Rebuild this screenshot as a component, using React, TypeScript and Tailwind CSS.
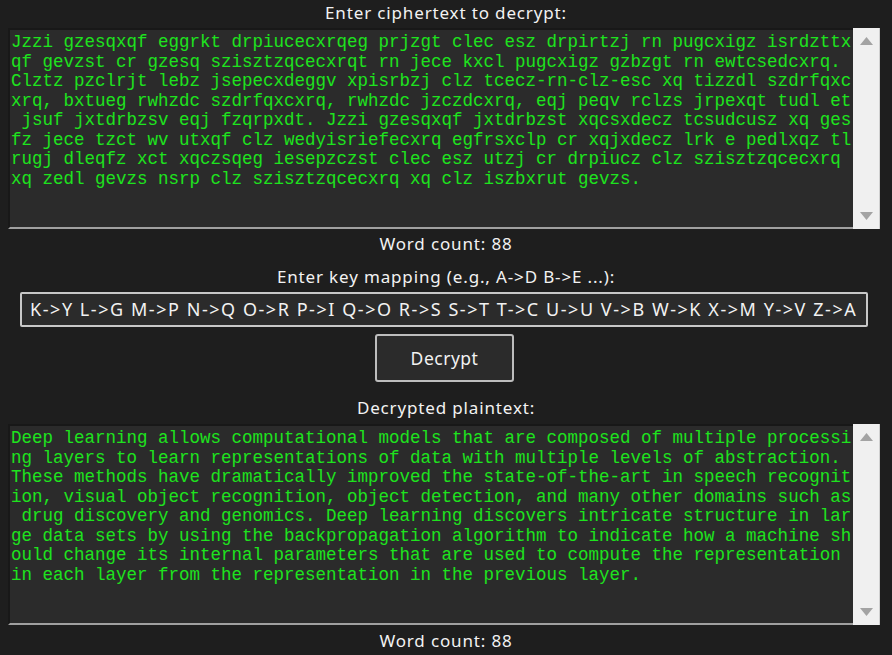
import React from 'react';

const cipherLines = [
  'Jzzi gzesqxqf eggrkt drpiucecxrqeg prjzgt clec esz drpirtzj rn pugcxigz isrdzttx',
  'qf gevzst cr gzesq szisztzqcecxrqt rn jece kxcl pugcxigz gzbzgt rn ewtcsedcxrq.',
  'Clztz pzclrjt lebz jsepecxdeggv xpisrbzj clz tcecz-rn-clz-esc xq tizzdl szdrfqxc',
  'xrq, bxtueg rwhzdc szdrfqxcxrq, rwhzdc jzczdcxrq, eqj peqv rclzs jrpexqt tudl et',
  ' jsuf jxtdrbzsv eqj fzqrpxdt. Jzzi gzesqxqf jxtdrbzst xqcsxdecz tcsudcusz xq ges',
  'fz jece tzct wv utxqf clz wedyisriefecxrq egfrsxclp cr xqjxdecz lrk e pedlxqz tl',
  'rugj dleqfz xct xqczsqeg iesepzczst clec esz utzj cr drpiucz clz szisztzqcecxrq ',
  'xq zedl gevzs nsrp clz szisztzqcecxrq xq clz iszbxrut gevzs.',
];

const plainLines = [
  'Deep learning allows computational models that are composed of multiple processi',
  'ng layers to learn representations of data with multiple levels of abstraction.',
  'These methods have dramatically improved the state-of-the-art in speech recognit',
  'ion, visual object recognition, object detection, and many other domains such as',
  ' drug discovery and genomics. Deep learning discovers intricate structure in lar',
  'ge data sets by using the backpropagation algorithm to indicate how a machine sh',
  'ould change its internal parameters that are used to compute the representation ',
  'in each layer from the representation in the previous layer.',
];

const keyMapping =
  'K->Y L->G M->P N->Q O->R P->I Q->O R->S S->T T->C U->U V->B W->K X->M Y->V Z->A';

const sans = "font-['Noto_Sans','Open_Sans',sans-serif]";

const Label: React.FC<{ children: React.ReactNode; className?: string }> = ({ children, className }) => (
  <div className={`${sans} text-[17px] leading-[24px] tracking-[0.85px] text-[#f2f2f2] text-center ${className ?? ''}`}>
    {children}
  </div>
);

const ScrolledText: React.FC<{ lines: string[]; className?: string }> = ({ lines, className }) => (
  <div className={`flex ml-[8px] w-[872px] h-[201px] ${className ?? ''}`}>
    <div className="flex-1 bg-[#2b2b2b] border-t-2 border-l-2 border-b-2 border-t-[#181818] border-l-[#181818] border-b-[#a0a0a0] pl-[1px] pt-[3px] overflow-hidden">
      {lines.map((line, i) => (
        <div
          key={i}
          className="font-['Liberation_Mono',monospace] text-[17.5px] leading-[19.5px] text-[#1ee31e] whitespace-pre"
        >
          {line}
        </div>
      ))}
    </div>
    <div className="w-[27px] bg-[#f0f0f0] border-r border-[#d0d0d0] flex flex-col items-center justify-between py-[9px]">
      <svg width="13" height="8" viewBox="0 0 13 8">
        <polygon points="6.5,0 13,8 0,8" fill="#a3a3a3" />
      </svg>
      <svg width="13" height="8" viewBox="0 0 13 8">
        <polygon points="0,0 13,0 6.5,8" fill="#a3a3a3" />
      </svg>
    </div>
  </div>
);

export default function App() {
  return (
    <div className="w-[892px] h-[655px] bg-[#1e1e1e] overflow-hidden pt-[1px]">
      <Label>Enter ciphertext to decrypt:</Label>
      <ScrolledText lines={cipherLines} className="mt-[3px]" />
      <Label className="mt-[3px]">Word count: 88</Label>
      <Label className="mt-[9px]">Enter key mapping (e.g., A-&gt;D B-&gt;E ...):</Label>
      <div className="ml-[20px] mt-[3px] w-[848px] h-[35px] border-2 border-[#c8c8c8] rounded-[2px] bg-[#2b2b2b] flex items-center pl-[8px] overflow-hidden">
        <span className={`${sans} text-[18px] tracking-[1.55px] text-[#f2f2f2] whitespace-pre`}>{keyMapping}</span>
      </div>
      <div className="flex justify-center mt-[7px] pr-[3px]">
        <button className={`w-[139px] h-[48px] border-2 border-[#bdbdbd] rounded-[3px] bg-[#2b2b2b] ${sans} text-[17.5px] tracking-[0.5px] text-[#f2f2f2]`}>
          Decrypt
        </button>
      </div>
      <Label className="mt-[14px]">Decrypted plaintext:</Label>
      <ScrolledText lines={plainLines} className="mt-[4px]" />
      <Label className="mt-[4px]">Word count: 88</Label>
    </div>
  );
}
